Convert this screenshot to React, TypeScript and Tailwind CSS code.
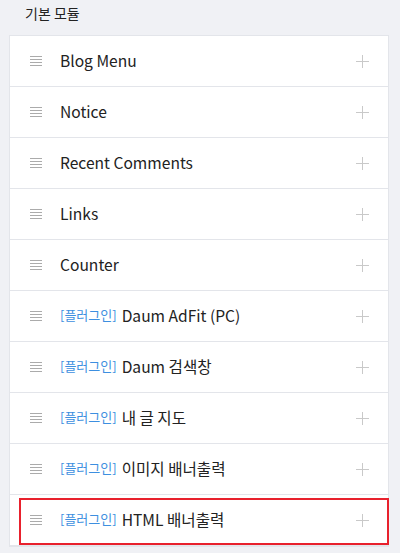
const items: { tag?: string; label: string }[] = [
  { label: "Blog Menu" },
  { label: "Notice" },
  { label: "Recent Comments" },
  { label: "Links" },
  { label: "Counter" },
  { tag: "[플러그인]", label: "Daum AdFit (PC)" },
  { tag: "[플러그인]", label: "Daum 검색창" },
  { tag: "[플러그인]", label: "내 글 지도" },
  { tag: "[플러그인]", label: "이미지 배너출력" },
  { tag: "[플러그인]", label: "HTML 배너출력" },
];

function DragHandle() {
  return (
    <svg width="12" height="10" viewBox="0 0 12 10" className="shrink-0">
      <g fill="#ababab">
        <rect x="0" y="0" width="12" height="1" />
        <rect x="0" y="3" width="12" height="1" />
        <rect x="0" y="6" width="12" height="1" />
        <rect x="0" y="9" width="12" height="1" />
      </g>
    </svg>
  );
}

function PlusIcon() {
  return (
    <svg width="13" height="13" viewBox="0 0 13 13" className="shrink-0">
      <g fill="#c9c9c9">
        <rect x="6" y="0" width="1" height="13" />
        <rect x="0" y="6" width="13" height="1" />
      </g>
    </svg>
  );
}

export default function App() {
  return (
    <div
      className="h-[553px] w-[400px] overflow-hidden bg-[#f0f1f5]"
      style={{ fontFamily: '"Noto Sans CJK KR", "Noto Sans", sans-serif' }}
    >
      <div className="flex h-[35px] items-start pl-[25px] pt-[3px] text-[14px] leading-5 text-[#222]">
        기본 모듈
      </div>
      <div className="ml-[9px] w-[380px] border border-[#e3e5ea] bg-white">
        {items.map((item, i) => (
          <div
            key={item.label}
            className="relative flex h-[51px] items-center border-b border-[#e3e5ea] pl-[20px] pr-[19px]"
          >
            <DragHandle />
            <div className="ml-[18px] flex flex-1 items-center whitespace-nowrap pb-[2px] leading-6">
              {item.tag && (
                <span className="mr-[5px] text-[13px] text-[#3d8fe0]">{item.tag}</span>
              )}
              <span className="text-[15.6px] text-[#222]">{item.label}</span>
            </div>
            <PlusIcon />
            {i === items.length - 1 && (
              <div className="pointer-events-none absolute bottom-0 left-[9px] -right-[1px] top-[3px] border-2 border-[#e8212d]" />
            )}
          </div>
        ))}
      </div>
    </div>
  );
}
